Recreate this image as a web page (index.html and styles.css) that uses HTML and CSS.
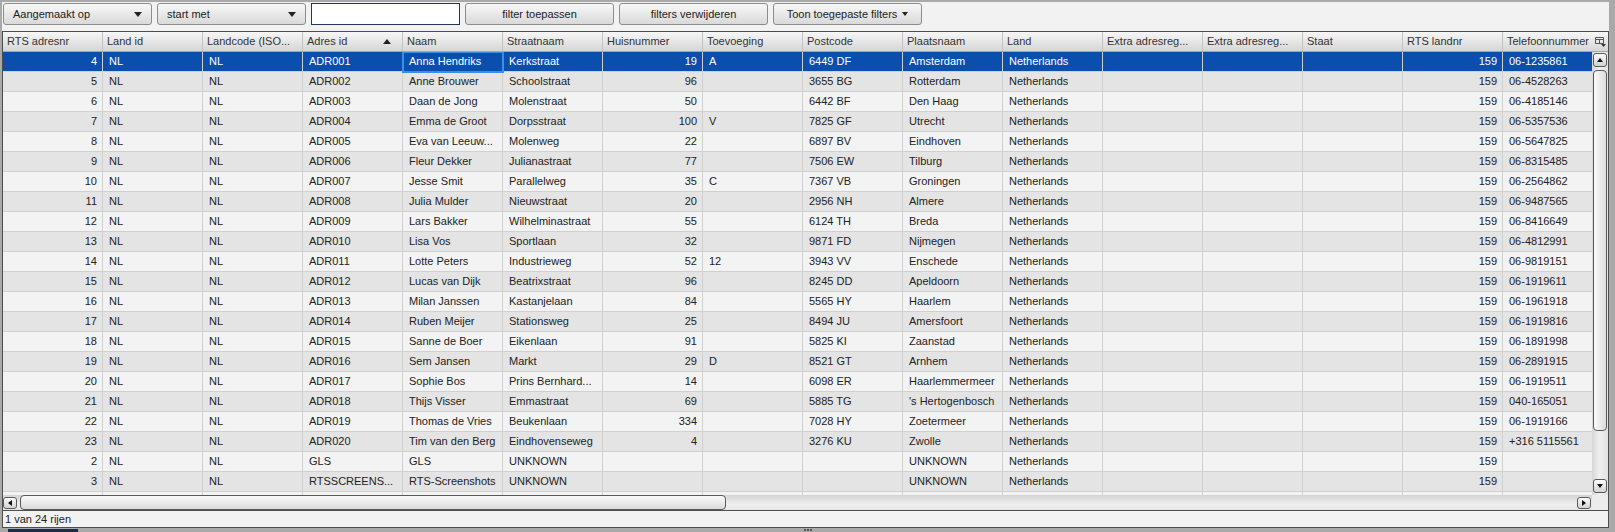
FILE: index.html
```html
<!DOCTYPE html>
<html lang="nl">
<head>
  <meta charset="UTF-8">
  <title>Adressen</title>
  <link rel="stylesheet" href="styles.css">
</head>
<body>

  <div class="app">
    <div class="toolbar">
      <button class="btn combo">Aangemaakt op <span class="caret"></span></button>
      <button class="btn combo">start met <span class="caret"></span></button>
      <input class="filter-input" type="text">
      <button class="btn">filter toepassen</button>
      <button class="btn">filters verwijderen</button>
      <button class="btn">Toon toegepaste filters <span class="caret small"></span></button>
    </div>

    <div class="grid">
      <div class="grid-head">
        <div class="hc">RTS adresnr</div>
        <div class="hc">Land id</div>
        <div class="hc">Landcode (ISO...</div>
        <div class="hc sorted">Adres id <span class="sort-up"></span></div>
        <div class="hc">Naam</div>
        <div class="hc">Straatnaam</div>
        <div class="hc">Huisnummer</div>
        <div class="hc">Toevoeging</div>
        <div class="hc">Postcode</div>
        <div class="hc">Plaatsnaam</div>
        <div class="hc">Land</div>
        <div class="hc">Extra adresreg...</div>
        <div class="hc">Extra adresreg...</div>
        <div class="hc">Staat</div>
        <div class="hc">RTS landnr</div>
        <div class="hc last">Telefoonnummer
          <svg class="col-picker" width="11" height="10" viewBox="0 0 11 10">
            <path d="M0.5 0.5h8v6h-8z M0.5 2.5h8 M4.5 2.5v4" fill="none" stroke="#555"/>
            <path d="M6 7h5l-2.5 3z" fill="#333"/>
          </svg>
        </div>
      </div>

      <div class="grid-middle">
        <div class="grid-body">
          <table class="rows"><tbody id="gridRows"></tbody></table>
        </div>
        <div class="vscroll">
          <span class="sb-btn"><span class="tri up"></span></span>
          <span class="sb-thumb vertical"></span>
          <span class="sb-track"></span>
          <span class="sb-btn"><span class="tri down"></span></span>
        </div>
      </div>

      <div class="grid-bottom">
        <div class="hscroll">
          <span class="sb-btn flat"><span class="tri left"></span></span>
          <span class="sb-thumb horizontal"></span>
          <span class="sb-track"></span>
          <span class="sb-btn flat"><span class="tri right"></span></span>
        </div>
        <div class="corner"></div>
      </div>
    </div>

    <div class="status">1 van 24 rijen</div>
  </div>

  <div class="splitter">
    <span class="tab-peek"></span>
    <span class="grip"></span>
  </div>

  <script>
    const rows = [
      [4, "NL", "NL", "ADR001", "Anna Hendriks", "Kerkstraat", 19, "A", "6449 DF", "Amsterdam", "Netherlands", "", "", "", 159, "06-1235861"],
      [5, "NL", "NL", "ADR002", "Anne Brouwer", "Schoolstraat", 96, "", "3655 BG", "Rotterdam", "Netherlands", "", "", "", 159, "06-4528263"],
      [6, "NL", "NL", "ADR003", "Daan de Jong", "Molenstraat", 50, "", "6442 BF", "Den Haag", "Netherlands", "", "", "", 159, "06-4185146"],
      [7, "NL", "NL", "ADR004", "Emma de Groot", "Dorpsstraat", 100, "V", "7825 GF", "Utrecht", "Netherlands", "", "", "", 159, "06-5357536"],
      [8, "NL", "NL", "ADR005", "Eva van Leeuw...", "Molenweg", 22, "", "6897 BV", "Eindhoven", "Netherlands", "", "", "", 159, "06-5647825"],
      [9, "NL", "NL", "ADR006", "Fleur Dekker", "Julianastraat", 77, "", "7506 EW", "Tilburg", "Netherlands", "", "", "", 159, "06-8315485"],
      [10, "NL", "NL", "ADR007", "Jesse Smit", "Parallelweg", 35, "C", "7367 VB", "Groningen", "Netherlands", "", "", "", 159, "06-2564862"],
      [11, "NL", "NL", "ADR008", "Julia Mulder", "Nieuwstraat", 20, "", "2956 NH", "Almere", "Netherlands", "", "", "", 159, "06-9487565"],
      [12, "NL", "NL", "ADR009", "Lars Bakker", "Wilhelminastraat", 55, "", "6124 TH", "Breda", "Netherlands", "", "", "", 159, "06-8416649"],
      [13, "NL", "NL", "ADR010", "Lisa Vos", "Sportlaan", 32, "", "9871 FD", "Nijmegen", "Netherlands", "", "", "", 159, "06-4812991"],
      [14, "NL", "NL", "ADR011", "Lotte Peters", "Industrieweg", 52, "12", "3943 VV", "Enschede", "Netherlands", "", "", "", 159, "06-9819151"],
      [15, "NL", "NL", "ADR012", "Lucas van Dijk", "Beatrixstraat", 96, "", "8245 DD", "Apeldoorn", "Netherlands", "", "", "", 159, "06-1919611"],
      [16, "NL", "NL", "ADR013", "Milan Janssen", "Kastanjelaan", 84, "", "5565 HY", "Haarlem", "Netherlands", "", "", "", 159, "06-1961918"],
      [17, "NL", "NL", "ADR014", "Ruben Meijer", "Stationsweg", 25, "", "8494 JU", "Amersfoort", "Netherlands", "", "", "", 159, "06-1919816"],
      [18, "NL", "NL", "ADR015", "Sanne de Boer", "Eikenlaan", 91, "", "5825 KI", "Zaanstad", "Netherlands", "", "", "", 159, "06-1891998"],
      [19, "NL", "NL", "ADR016", "Sem Jansen", "Markt", 29, "D", "8521 GT", "Arnhem", "Netherlands", "", "", "", 159, "06-2891915"],
      [20, "NL", "NL", "ADR017", "Sophie Bos", "Prins Bernhard...", 14, "", "6098 ER", "Haarlemmermeer", "Netherlands", "", "", "", 159, "06-1919511"],
      [21, "NL", "NL", "ADR018", "Thijs Visser", "Emmastraat", 69, "", "5885 TG", "'s Hertogenbosch", "Netherlands", "", "", "", 159, "040-165051"],
      [22, "NL", "NL", "ADR019", "Thomas de Vries", "Beukenlaan", 334, "", "7028 HY", "Zoetermeer", "Netherlands", "", "", "", 159, "06-1919166"],
      [23, "NL", "NL", "ADR020", "Tim van den Berg", "Eindhovenseweg", 4, "", "3276 KU", "Zwolle", "Netherlands", "", "", "", 159, "+316 5115561"],
      [2, "NL", "NL", "GLS", "GLS", "UNKNOWN", "", "", "", "UNKNOWN", "Netherlands", "", "", "", 159, ""],
      [3, "NL", "NL", "RTSSCREENS...", "RTS-Screenshots", "UNKNOWN", "", "", "", "UNKNOWN", "Netherlands", "", "", "", 159, ""],
      // last row is scrolled out of view, only its top edge shows
      ["", "", "", "", "", "", "", "", "", "", "", "", "", "", "", ""]
    ];

    // columns that are right aligned
    const numCols = [0, 6, 14];

    const tbody = document.getElementById("gridRows");
    rows.forEach((row, i) => {
      const tr = document.createElement("tr");
      tr.className = i === 0 ? "selected" : (i % 2 ? "odd" : "even");
      row.forEach((val, c) => {
        const td = document.createElement("td");
        td.textContent = val;
        if (numCols.includes(c)) td.classList.add("num");
        if (i === 0 && c === 4) td.classList.add("focus");
        tr.appendChild(td);
      });
      tbody.appendChild(tr);
    });
  </script>

</body>
</html>
```

FILE: styles.css
```css
* {
  box-sizing: border-box;
}

body {
  margin: 0;
  background: #a9a9a9;
  font-family: "Liberation Sans", Arial, sans-serif;
  font-size: 11px;
  color: #222;
  height: 532px;
  overflow: hidden;
}

.app {
  margin: 2px 6px 0 2px;
  height: 526px;
  display: flex;
  flex-direction: column;
}

/* toolbar */

.toolbar {
  height: 29px;
  flex-shrink: 0;
  background: #f2f2f2;
  display: flex;
  align-items: flex-start;
  gap: 5px;
  padding: 1px 0 0 1px;
}

.btn {
  width: 149px;
  height: 22px;
  margin: 0;
  padding: 0 9px;
  border: 1px solid #8c8c8c;
  border-radius: 3px;
  background: linear-gradient(#f8f8f8, #d9d9d9);
  font: inherit;
  color: #222;
  display: flex;
  align-items: center;
  justify-content: center;
  gap: 5px;
}

.btn.combo {
  justify-content: space-between;
}

.caret {
  width: 0;
  height: 0;
  border-left: 4px solid transparent;
  border-right: 4px solid transparent;
  border-top: 5px solid #222;
}

.caret.small {
  border-left-width: 3px;
  border-right-width: 3px;
  border-top-width: 4px;
}

.filter-input {
  width: 149px;
  height: 22px;
  margin: 0;
  padding: 0 3px;
  border: 1px solid #22385a;
  background: #fff;
  font: inherit;
}

/* grid */

.grid {
  height: 480px;
  flex-shrink: 0;
  border: 1px solid #4d4d4d;
  background: #f3f3f3;
  display: flex;
  flex-direction: column;
  overflow: hidden;
}

.grid-head {
  height: 20px;
  flex-shrink: 0;
  display: flex;
  background: linear-gradient(#f7f7f7, #d6d6d6);
  border-bottom: 1px solid #a6a6a6;
}

.hc {
  width: 100px;
  flex-shrink: 0;
  padding: 0 4px;
  border-right: 1px solid #c2c2c2;
  line-height: 19px;
  color: #333;
  white-space: nowrap;
  overflow: hidden;
}

.hc.sorted {
  display: flex;
  align-items: center;
  justify-content: space-between;
  padding-right: 11px;
}

.sort-up {
  width: 0;
  height: 0;
  border-left: 4px solid transparent;
  border-right: 4px solid transparent;
  border-bottom: 5px solid #222;
}

.hc.last {
  flex: 1;
  border-right: 0;
  display: flex;
  align-items: center;
  justify-content: space-between;
  padding-right: 2px;
}

.grid-middle {
  height: 443px;
  flex-shrink: 0;
  display: flex;
}

.grid-body {
  flex: 1;
  overflow: hidden;
}

.rows {
  width: 1600px;
  table-layout: fixed;
  border-collapse: separate;
  border-spacing: 0;
}

.rows td {
  width: 100px;
  height: 20px;
  padding: 0 6px;
  border-right: 1px solid #d0d0d0;
  border-bottom: 1px solid #d0d0d0;
  line-height: 19px;
  white-space: nowrap;
  overflow: hidden;
}

.rows td.num {
  text-align: right;
  padding-right: 5px;
}

.rows tr.even td {
  background: #f3f3f3;
}

.rows tr.odd td {
  background: #e4e4e4;
}

.rows tr.selected td {
  background: #0b4fae;
  color: #fff;
}

.rows td.focus {
  outline: 2px solid #3a8ee8;
  outline-offset: -1px;
}

/* scrollbars */

.vscroll {
  width: 16px;
  flex-shrink: 0;
  display: flex;
  flex-direction: column;
  align-items: center;
  padding: 1px 0 2px;
  background: linear-gradient(90deg, #d6d6d6, #efefef 45%, #e2e2e2);
}

.sb-btn {
  width: 14px;
  height: 14px;
  flex-shrink: 0;
  border: 1px solid #595959;
  border-radius: 3px;
  background: linear-gradient(#fbfbfb, #d3d3d3);
  display: flex;
  align-items: center;
  justify-content: center;
}

.sb-btn.flat {
  height: 12px;
}

.sb-thumb {
  flex-shrink: 0;
  border: 1px solid #595959;
  border-radius: 4px;
}

.sb-thumb.vertical {
  width: 14px;
  height: 361px;
  margin-top: 3px;
  background: linear-gradient(90deg, #fafafa, #dcdcdc);
}

.sb-thumb.horizontal {
  width: 706px;
  height: 15px;
  margin-left: 3px;
  background: linear-gradient(#fafafa, #dadada);
}

.sb-track {
  flex: 1;
}

.tri {
  width: 0;
  height: 0;
  border: 3px solid transparent;
}

.tri.up {
  border-top: 0;
  border-bottom: 4px solid #111;
}

.tri.down {
  border-bottom: 0;
  border-top: 4px solid #111;
}

.tri.left {
  border-left: 0;
  border-right: 4px solid #111;
}

.tri.right {
  border-right: 0;
  border-left: 4px solid #111;
}

.grid-bottom {
  height: 15px;
  flex-shrink: 0;
  display: flex;
}

.hscroll {
  flex: 1;
  display: flex;
  align-items: center;
  padding-right: 1px;
  background: linear-gradient(#d3d3d3, #eeeeee 60%, #e6e6e6);
}

.corner {
  width: 16px;
  background: #ececec;
}

/* footer */

.status {
  height: 17px;
  flex-shrink: 0;
  padding-left: 2px;
  border: 1px solid #4d4d4d;
  border-top: 0;
  background: #f2f2f2;
  line-height: 16px;
}

.splitter {
  height: 4px;
  display: grid;
  grid-template-columns: 1fr auto 1fr;
  align-items: start;
}

.tab-peek {
  width: 70px;
  height: 3px;
  margin: 1px 0 0 8px;
  background: #1d2b4c;
}

.grip {
  width: 8px;
  height: 2px;
  margin-top: 1px;
  background: repeating-linear-gradient(90deg, #555 0 2px, transparent 2px 3px);
}
```
